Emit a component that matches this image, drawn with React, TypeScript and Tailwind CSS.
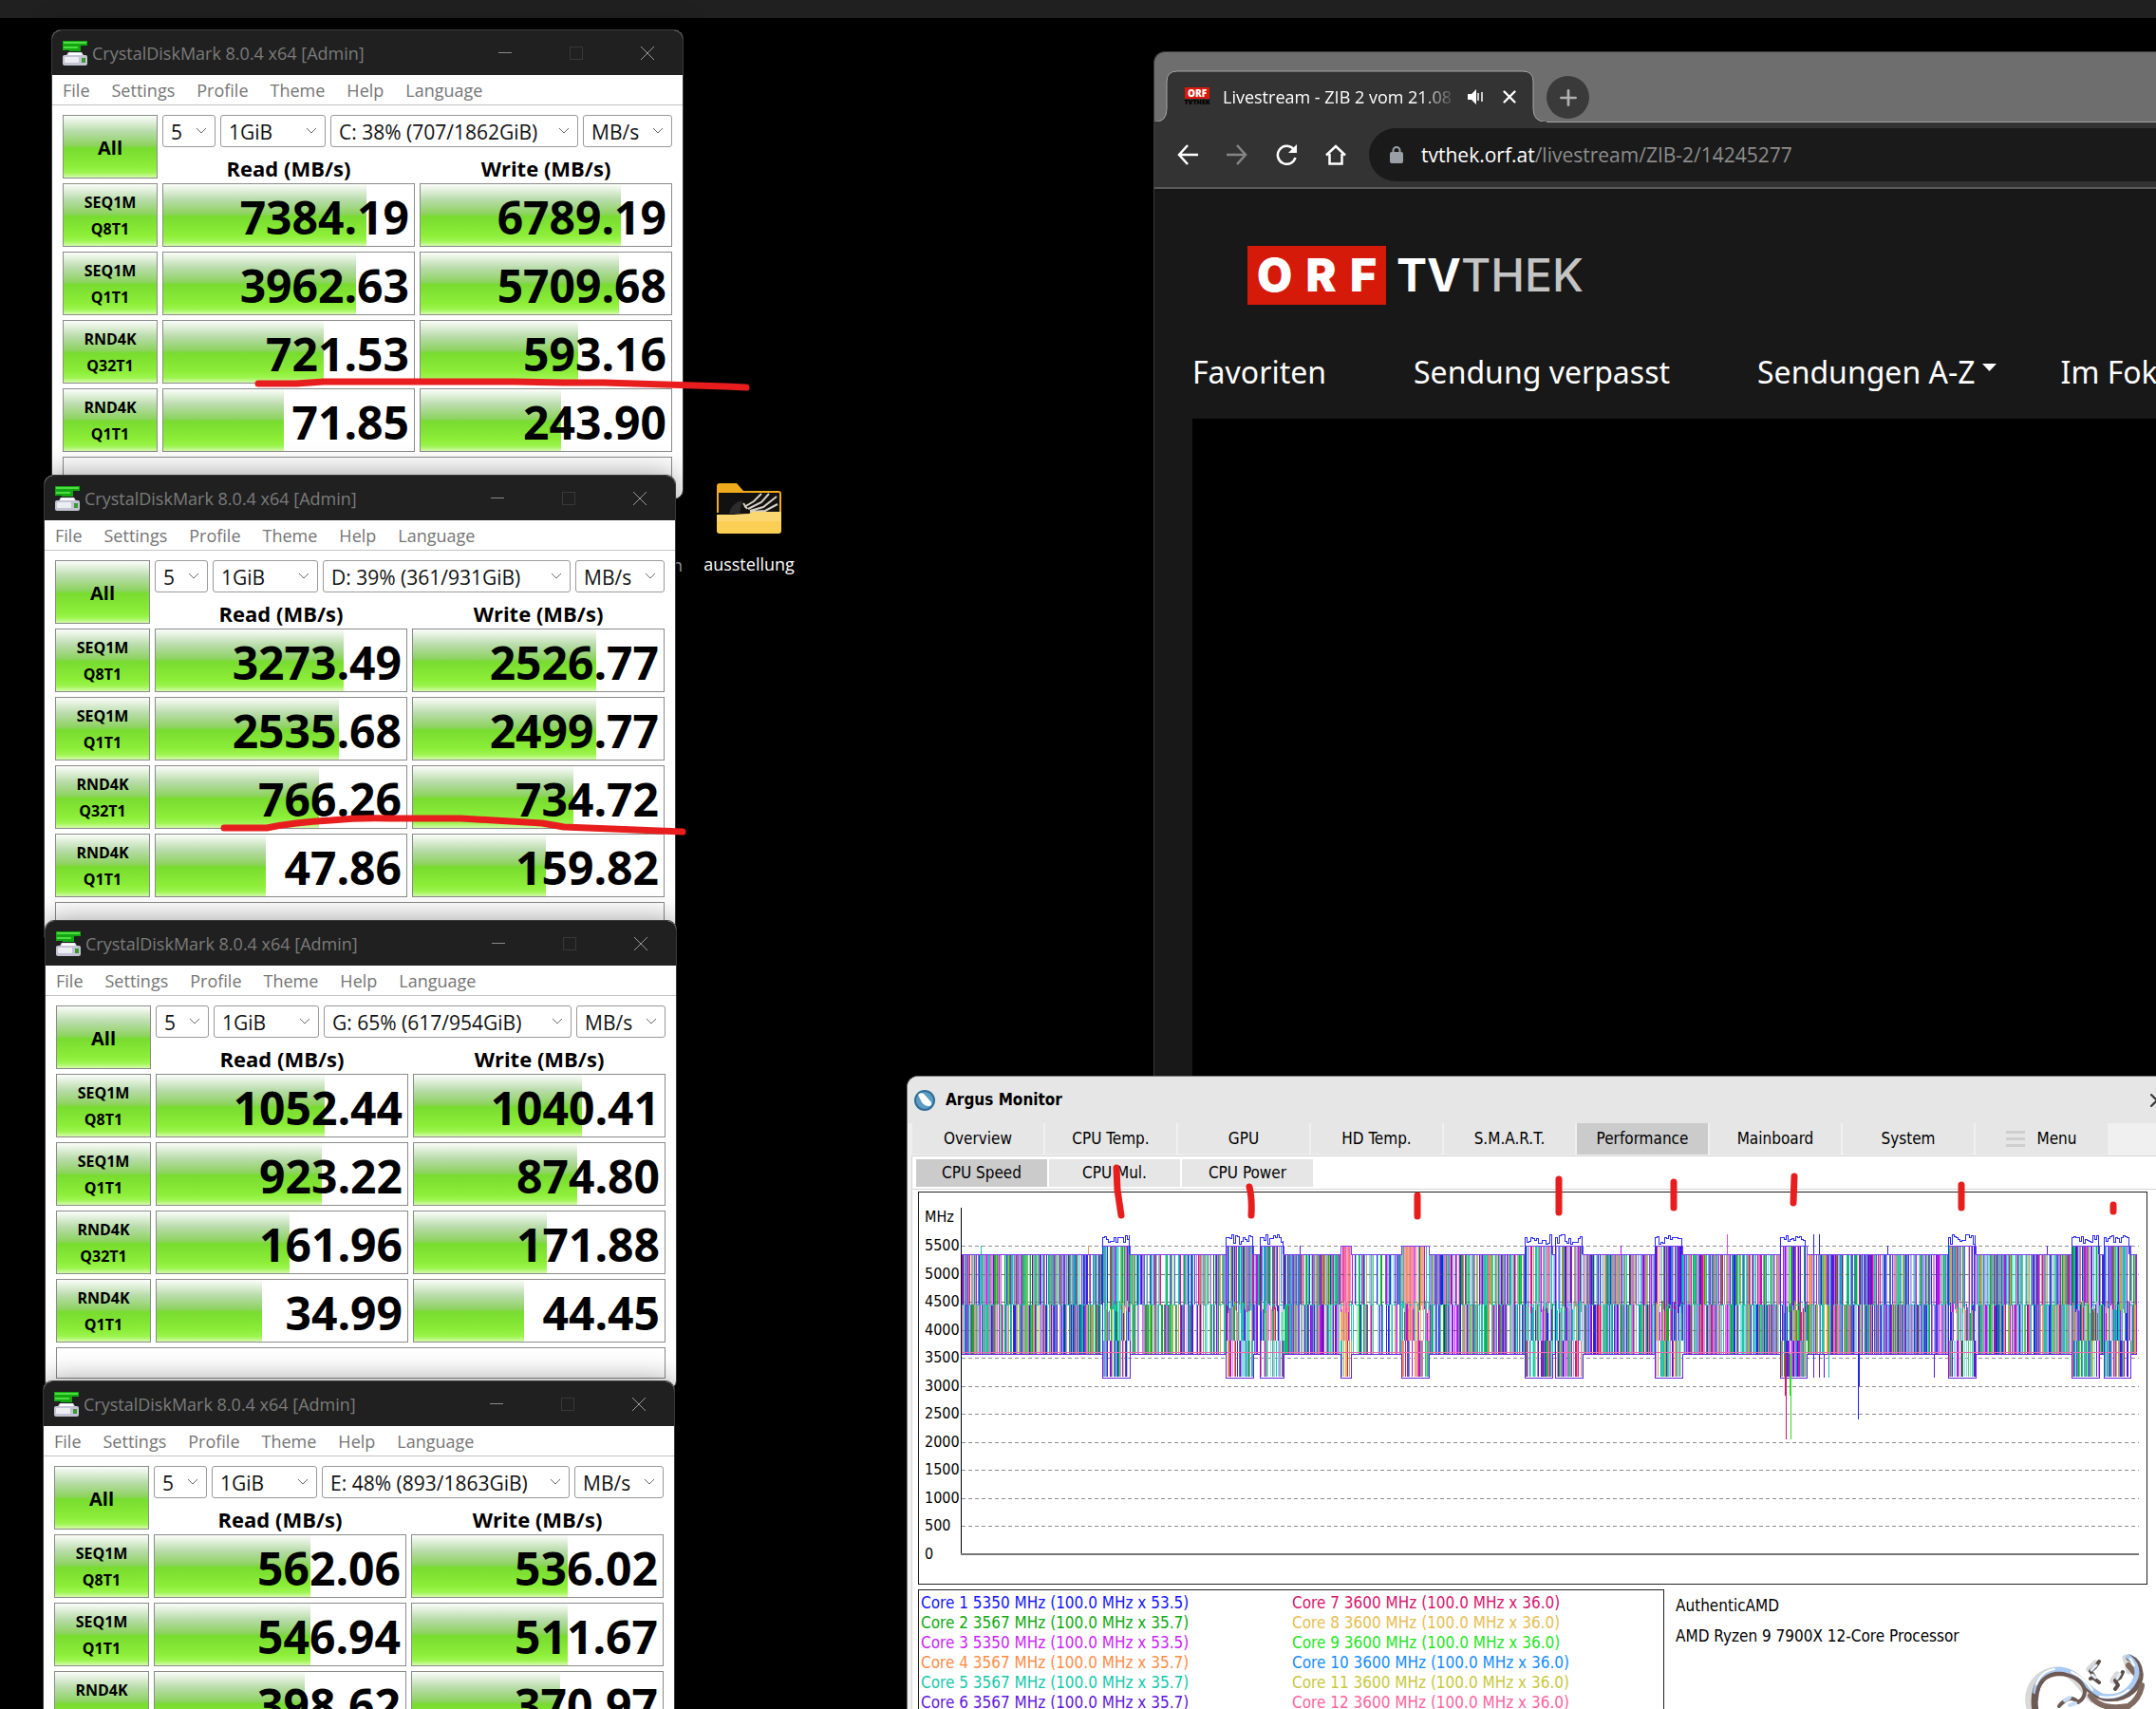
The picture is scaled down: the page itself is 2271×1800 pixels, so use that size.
import { LuPlus, LuX } from 'react-icons/lu';

interface TestRow {
    name: string;
    queue: string;
    read: string;
    readFill: number;
    write: string;
    writeFill: number;
}

interface DiskMarkProps {
    id: string;
    drive: string;
    place: string;
    rows: TestRow[];
}

const row = (
    name: string,
    queue: string,
    read: string,
    readFill: number,
    write: string,
    writeFill: number
): TestRow => ({ name, queue, read, readFill, write, writeFill });

const DISKS: DiskMarkProps[] = [
    {
        id: 'c',
        drive: 'C: 38% (707/1862GiB)',
        place: 'left-[54px] top-[31px]',
        rows: [
            row('SEQ1M', 'Q8T1', '7384.19', 81, '6789.19', 80),
            row('SEQ1M', 'Q1T1', '3962.63', 77, '5709.68', 79),
            row('RND4K', 'Q32T1', '721.53', 64, '593.16', 63),
            row('RND4K', 'Q1T1', '71.85', 48, '243.90', 56)
        ]
    },
    {
        id: 'd',
        drive: 'D: 39% (361/931GiB)',
        place: 'left-[46px] top-[500px]',
        rows: [
            row('SEQ1M', 'Q8T1', '3273.49', 75, '2526.77', 73),
            row('SEQ1M', 'Q1T1', '2535.68', 73, '2499.77', 73),
            row('RND4K', 'Q32T1', '766.26', 65, '734.72', 64),
            row('RND4K', 'Q1T1', '47.86', 44, '159.82', 53)
        ]
    },
    {
        id: 'g',
        drive: 'G: 65% (617/954GiB)',
        place: 'left-[47px] top-[969px]',
        rows: [
            row('SEQ1M', 'Q8T1', '1052.44', 67, '1040.41', 67),
            row('SEQ1M', 'Q1T1', '923.22', 66, '874.80', 65),
            row('RND4K', 'Q32T1', '161.96', 53, '171.88', 53),
            row('RND4K', 'Q1T1', '34.99', 42, '44.45', 44)
        ]
    },
    {
        id: 'e',
        drive: 'E: 48% (893/1863GiB)',
        place: 'left-[45px] top-[1454px]',
        rows: [
            row('SEQ1M', 'Q8T1', '562.06', 62, '536.02', 62),
            row('SEQ1M', 'Q1T1', '546.94', 62, '511.67', 62),
            row('RND4K', 'Q32T1', '398.62', 60, '370.97', 59)
        ]
    }
];

const MENU = ['File', 'Settings', 'Profile', 'Theme', 'Help', 'Language'];

const GREEN =
    'bg-[linear-gradient(to_bottom,#fbfdfa_0%,#b9dcab_25%,#8dd35f_48%,#78dc30_52%,#8cee38_82%,#9df550_92%,#d5fbab_100%)]';

function DiskIcon() {
    return (
        <svg viewBox="0 0 26 26" className="w-[26px] h-[26px]">
            <path d="M0 0h26v5h-7v6H7v-1H0z" fill="#12a612" />
            <path d="M1 1h24v2H1zM1 6h15v2H1z" fill="#4fdc42" />
            <path d="M6 12h14l3 5H3z" fill="#e4e6ee" />
            <path d="M7 13h12l1 2H6z" fill="#fff" />
            <rect x="0" y="15" width="26" height="11" rx="2" fill="#c3c5d4" />
            <rect x="2" y="17" width="15" height="6" rx="1" fill="#eceef4" />
            <rect x="20" y="18" width="4" height="5" fill="#3d9a32" />
        </svg>
    );
}

function Picker({ label, value, width }: { label: string; value: string; width: string }) {
    return (
        <div className={`relative ${width}`}>
            <select
                aria-label={label}
                className="block w-full h-[34px] appearance-none rounded-[3px] border border-[#9a9a9a] bg-white pl-2 pt-px text-[21px] leading-[32px] text-[#111]"
            >
                <option>{value}</option>
            </select>
            <svg
                viewBox="0 0 12 8"
                className="absolute right-[9px] top-[13px] w-3 h-2 pointer-events-none"
                fill="none"
                stroke="#666"
            >
                <path d="M1 1l5 5 5-5" />
            </svg>
        </div>
    );
}

function Score({ value, fill }: { value: string; fill: number }) {
    return (
        <td className="p-0">
            <div className="relative h-[67px] border border-[#8b8b8b] bg-white">
                <div className={`absolute inset-y-0 left-0 ${GREEN}`} style={{ width: `${fill}%` }} />
                <div className="relative pr-[5px] text-right text-[48px] leading-[69px] font-bold text-black">
                    {value}
                </div>
            </div>
        </td>
    );
}

function DiskMark({ drive, place, rows }: DiskMarkProps) {
    return (
        <section
            className={`absolute ${place} w-[666px] overflow-hidden rounded-[10px] border border-[#3a3a3a] bg-white shadow-[0_0_30px_rgba(0,0,0,0.4)]`}
        >
            <header className="flex items-center h-[47px] bg-[#202020] text-[#7b7b7b]">
                <div className="flex flex-1 items-center gap-[5px] pl-[11px] text-[18px] leading-6">
                    <DiskIcon />
                    <span>CrystalDiskMark 8.0.4 x64 [Admin]</span>
                </div>
                <button aria-label="Minimize" className="flex w-[75px] h-full items-center justify-center">
                    <span className="w-[14px] h-px bg-[#8a8a8a]" />
                </button>
                <button aria-label="Maximize" className="flex w-[75px] h-full items-center justify-center">
                    <span className="w-[14px] h-[14px] border border-[#383838]" />
                </button>
                <button aria-label="Close" className="flex w-[75px] h-full items-center justify-center">
                    <svg viewBox="0 0 14 14" className="w-[14px] h-[14px]" stroke="#9a9a9a">
                        <path d="M0 0l14 14M14 0L0 14" />
                    </svg>
                </button>
            </header>
            <nav className="flex h-[32px] items-center gap-[23px] border-b border-[#c4c4c4] pl-[11px] text-[18px] leading-6 text-[#757575]">
                {MENU.map((item) => (
                    <button key={item}>{item}</button>
                ))}
            </nav>
            <div className="px-[6px] pt-[5px] pb-[11px]">
                <table className="w-full table-fixed border-separate border-spacing-[5px]">
                    <colgroup>
                        <col className="w-[100px]" />
                        <col />
                        <col />
                    </colgroup>
                    <thead>
                        <tr>
                            <td rowSpan={2} className="p-0">
                                <button
                                    className={`block w-full h-[67px] border border-[#8b8b8b] pt-[2px] text-[20px] font-bold ${GREEN}`}
                                >
                                    All
                                </button>
                            </td>
                            <td colSpan={2} className="p-0">
                                <div className="flex gap-[5px]">
                                    <Picker label="Test count" value="5" width="w-[56px]" />
                                    <Picker label="Test size" value="1GiB" width="w-[111px]" />
                                    <Picker label="Drive" value={drive} width="flex-1" />
                                    <Picker label="Unit" value="MB/s" width="w-[94px]" />
                                </div>
                            </td>
                        </tr>
                        <tr>
                            <th className="h-7 p-0 pt-[6px] text-[22px] leading-[22px] font-bold">Read (MB/s)</th>
                            <th className="h-7 p-0 pt-[6px] text-[22px] leading-[22px] font-bold">Write (MB/s)</th>
                        </tr>
                    </thead>
                    <tbody>
                        {rows.map((r) => (
                            <tr key={r.name + r.queue}>
                                <th className="p-0">
                                    <button
                                        className={`block w-full h-[67px] border border-[#8b8b8b] text-[16px] leading-7 font-bold ${GREEN}`}
                                    >
                                        {r.name}
                                        <br />
                                        {r.queue}
                                    </button>
                                </th>
                                <Score value={r.read} fill={r.readFill} />
                                <Score value={r.write} fill={r.writeFill} />
                            </tr>
                        ))}
                    </tbody>
                </table>
                <div className="mx-[5px] h-[33px] border border-[#8b8b8b] bg-white" />
            </div>
        </section>
    );
}

function DesktopFolder() {
    return (
        <div className="absolute left-[736px] top-[507px] flex w-[106px] flex-col items-center gap-[19px]">
            <svg viewBox="0 0 70 56" className="w-[70px] h-14">
                <path d="M1 5q0-3 3-3h18l7 8h37q3 0 3 3v20H1z" fill="#f0ac1c" />
                <path d="M3 12h64v24H3z" fill="#111" />
                <path d="M14 34q2-11 14-14l-3 14z" fill="#2c2c2c" />
                <g stroke="#d8d0c4" strokeWidth="2" fill="none">
                    <path d="M30 27l10-6 8-8M34 29l14-7 8-9M36 31l14-4 14-11M36 32l16-1 13-7M33 29l-4-6" />
                </g>
                <path d="M1 35h18l16-1 4-2h30v20q0 3-3 3H4q-3 0-3-3z" fill="#fbcf55" />
                <path d="M1 35h18l16-1 4-2h30v10H1z" fill="#fcdc85" opacity=".6" />
            </svg>
            <span className="text-[18px] leading-6 text-white">ausstellung</span>
        </div>
    );
}

function Browser() {
    return (
        <section className="absolute left-[1215px] right-0 top-[54px] bottom-0 flex flex-col overflow-hidden rounded-tl-[12px] border-l border-t border-[#3a3a3a] bg-[#181818]">
            <div className="relative flex h-[74px] shrink-0 items-end bg-[#6e6e6e]">
                <div className="absolute inset-x-0 bottom-0 h-px bg-[#a5a5a5]" />
                <svg viewBox="0 0 414 55" className="absolute left-0 bottom-0 w-[414px] h-[55px]">
                    <path
                        d="M0 54.5q13 0 13-14V12Q13 1 24 1H388q11 0 11 11V40.500q0 14 14 14V55H0z"
                        fill="#333"
                        stroke="#a5a5a5"
                    />
                    <path d="M0 55h413" stroke="#333" strokeWidth="2" />
                </svg>
                <div className="relative flex h-[54px] w-[400px] items-center pl-8 text-white">
                    <div className="flex w-[26px] flex-col items-center font-black">
                        <span className="w-full bg-[#d8190c] text-center text-[10px] leading-[12px]">ORF</span>
                        <span className="text-[7px] leading-[8px] text-black">TVTHEK</span>
                    </div>
                    <span className="ml-[14px] w-[246px] overflow-hidden whitespace-nowrap text-[18px] leading-6 [mask-image:linear-gradient(to_right,black_85%,transparent)]">
                        Livestream - ZIB 2 vom 21.08
                    </span>
                    <button aria-label="Mute tab" className="ml-3">
                        <svg viewBox="0 0 17 16" className="w-[17px] h-4" fill="#fff">
                            <path d="M0 5h4l5-5v16l-5-5H0z" />
                            <path d="M11 4v8M15 3v10" stroke="#fff" strokeWidth="1.500" />
                        </svg>
                    </button>
                    <button aria-label="Close tab" className="ml-4">
                        <LuX size={22} strokeWidth={2.5} />
                    </button>
                </div>
                <button
                    aria-label="New tab"
                    className="relative mb-1 ml-[13px] flex h-[45px] w-[45px] items-center justify-center rounded-full bg-[#3a3a3a] text-[#b0b0b0]"
                >
                    <LuPlus size={26} strokeWidth={2.5} />
                </button>
            </div>
            <div className="flex h-[70px] shrink-0 items-center border-b-2 border-[#5a5a5a] bg-[#333] pl-6">
                <div className="flex w-[202px] items-center gap-[30px]">
                    <button aria-label="Back">
                        <svg viewBox="0 0 22 22" className="w-[22px] h-[22px]" fill="none" stroke="#fff" strokeWidth="2.500">
                            <path d="M22 11H2M11 1L2 11l9 10" />
                        </svg>
                    </button>
                    <button aria-label="Forward">
                        <svg viewBox="0 0 22 22" className="w-[22px] h-[22px]" fill="none" stroke="#858585" strokeWidth="2.500">
                            <path d="M0 11h20M11 1l9 10-9 10" />
                        </svg>
                    </button>
                    <button aria-label="Reload">
                        <svg viewBox="0 0 22 22" className="w-[22px] h-[22px]" fill="none" stroke="#fff" strokeWidth="2.500">
                            <path d="M18.500 5A9.500 9.500 0 1 0 20.500 14" />
                            <path d="M22 0v9h-9z" fill="#fff" stroke="none" />
                        </svg>
                    </button>
                    <button aria-label="Home">
                        <svg viewBox="0 0 22 22" className="w-[22px] h-[22px]" fill="none" stroke="#fff" strokeWidth="2.500">
                            <path d="M4.500 10v10.500h13V10M1 11.500L11 2l10 9.500" />
                        </svg>
                    </button>
                </div>
                <div className="flex h-14 flex-1 items-center rounded-l-full bg-[#1a1a1a] pl-[22px]">
                    <svg viewBox="0 0 14 18" className="w-[14px] h-[18px]">
                        <rect y="6" width="14" height="12" rx="2" fill="#9aa0a6" />
                        <path d="M3.500 7V4.500a3.500 3.500 0 0 1 7 0V7" fill="none" stroke="#9aa0a6" strokeWidth="2" />
                    </svg>
                    <a href="#live" className="ml-[19px] text-[21px] leading-7 text-[#8c8c8c]">
                        <span className="text-white">tvthek.orf.at</span>/livestream/ZIB-2/14245277
                    </a>
                </div>
            </div>
            <a
                href="#home"
                className="mt-[60px] ml-[98px] flex items-center self-start font-[Inter] text-[48px] leading-[62px]"
                aria-label="ORF TVthek"
            >
                <span className="flex h-[62px] w-[146px] items-center justify-between bg-[#d51a0a] px-[10px] font-black text-white">
                    <span>O</span>
                    <span>R</span>
                    <span>F</span>
                </span>
                <span className="ml-[11px] font-bold text-white">TV</span>
                <span className="font-medium text-[#c4c4c4]">THEK</span>
            </a>
            <nav className="mt-[50px] flex gap-[92px] whitespace-nowrap pl-10 font-['Noto_Sans'] text-[32px] leading-[42px] text-white">
                <a href="#fav">Favoriten</a>
                <a href="#missed">Sendung verpasst</a>
                <span className="flex gap-[68px]">
                    <a href="#az" className="flex gap-[7px]">
                        Sendungen A-Z
                        <svg viewBox="0 0 15 9" className="mt-[12px] w-[15px] h-[9px]" fill="#fff">
                            <path d="M0 0h15L7.500 8z" />
                        </svg>
                    </a>
                    <a href="#focus">Im Fokus</a>
                </span>
            </nav>
            <div className="mt-7 ml-10 flex-1 bg-black" />
        </section>
    );
}

// --- CPU frequency plot -------------------------------------------------

const PLOT_W = 1239;
const TOP = 49;
const MID = 102;
const BOTTOM = 154;

const SHADES = [
    '#12c8ae', '#12c8ae', '#12c8ae', '#86e2d8', '#86e2d8', '#86e2d8',
    '#b414f0', '#b414f0', '#dd84fb', '#dd84fb', '#5a18dc', '#5a18dc',
    '#4a68d0', '#2222f0', '#10b028', '#10b028', '#58d078', '#d81484',
    '#f768a8', '#f09860', '#7d8ca0', '#a08ce0', '#b8b030', '#1890d8'
];

// start, end, warm: stretches where the cores clock above base
const BURSTS: [number, number, boolean][] = [
    [149, 178, false], [279, 308, false], [315, 340, false], [400, 411, true],
    [464, 493, true], [594, 623, false], [626, 655, false], [731, 760, false],
    [863, 891, false], [1040, 1069, false], [1170, 1199, false], [1204, 1232, false]
];

const WARM = ['#f0905a', '#f768a8', '#d81484', '#d8c040', '#fa9cc0', '#e8a070', '#12c8ae', '#b414f0'];

const SPIKES: [number, number, string][] = [
    [21, 40, '#12c8ae'], [134, 40, '#f09860'], [357, 40, '#5a18dc'], [695, 40, '#b414f0'],
    [807, 28, '#dd44fb'], [898, 28, '#2222f0'], [904, 28, '#2222f0'], [976, 40, '#2222f0'],
    [1144, 40, '#5a18dc']
];

const DROPS: [number, number, string][] = [
    [868, 198, '#d81460'], [869, 244, '#d8146c'], [873, 198, '#28e028'], [874, 244, '#28e028'],
    [945, 223, '#2222f0'], [946, 188, '#2222f0'], [898, 179, '#5a18dc'], [904, 179, '#5a18dc'],
    [909, 179, '#5a18dc'], [914, 179, '#12c8ae'], [1025, 179, '#5a18dc']
];

function buildPlot() {
    let seed = 7;
    const rnd = () => {
        seed = (seed * 16807) % 2147483647;
        return seed / 2147483647;
    };
    const pick = (list: string[]) => list[Math.floor(rnd() * list.length)];
    const paths: Record<string, string> = {};
    const line = (color: string, x: number, y1: number, y2: number) => {
        paths[color] = `${paths[color] ?? ''}M${x + 0.5} ${y1}V${y2}`;
    };
    let blue = '';

    for (let x = 0; x < PLOT_W; x++) {
        const burst = BURSTS.find(([a, b]) => x >= a && x <= b);
        if (burst) {
            const colors = burst[2] ? WARM : SHADES;
            const mid = 98 + Math.floor(rnd() * 14);
            if (rnd() < 0.85) line(pick(colors), x, 40, mid);
            if (rnd() < 0.85) line(pick(colors), x, mid, 140);
            if (rnd() < 0.8) line(pick(colors), x, 140, 178);
        } else {
            const sparse = (x > 205 && x < 278) || (x > 412 && x < 462);
            const gap = sparse ? 0.4 : 0.1;
            const upper = pick(SHADES);
            if (rnd() > gap) line(upper, x, TOP, MID);
            if (rnd() > gap) line(rnd() < 0.3 ? upper : pick(SHADES), x, MID, BOTTOM);
        }
    }

    BURSTS.forEach(([a, b, warm]) => {
        if (warm) return;
        let d = `M${a} ${BOTTOM}V31`;
        for (let x = a + 2; x < b; x += 2) d += `H${x}V${28 + Math.floor(rnd() * 11)}`;
        blue += `${d}V${TOP}`;
    });
    return { paths, blue };
}

const PLOT = buildPlot();

function outline() {
    let floor = `M0 ${BOTTOM}`;
    let roof = `M0 ${TOP}`;
    BURSTS.forEach(([a, b]) => {
        floor += `H${a}V179H${b}V${BOTTOM}`;
        roof += `H${a}V40H${b}V${TOP}`;
    });
    return { floor: `${floor}H${PLOT_W}`, roof: `${roof}H${PLOT_W}` };
}

const EDGE = outline();

function CpuPlot() {
    const grid = Array.from({ length: 11 }, (_, i) => 365 - Math.round(((i + 1) * 325) / 11));
    return (
        <svg
            viewBox="0 0 1241 368"
            preserveAspectRatio="none"
            className="h-[368px] flex-1"
            fill="none"
            shapeRendering="crispEdges"
        >
            {grid.map((y) => (
                <path key={y} d={`M1 ${y + 0.5}H1241`} stroke="#8c8c8c" strokeDasharray="4 3" />
            ))}
            {Object.entries(PLOT.paths).map(([color, d]) => (
                <path key={color} d={d} stroke={color} />
            ))}
            {grid.slice(7, 10).map((y) => (
                <path key={y} d={`M1 ${y + 0.5}H${PLOT_W}`} stroke="#555" strokeOpacity=".5" strokeDasharray="4 3" />
            ))}
            <path d={EDGE.roof} stroke="#7a3cf0" />
            <path d={`M0 ${MID}.5H${PLOT_W}`} stroke="#12c8ae" strokeDasharray="3 5" />
            <path d={`M0 152.5H${PLOT_W}`} stroke="#f06aa8" />
            <path d={EDGE.floor} stroke="#6a1edc" />
            <path d={PLOT.blue} stroke="#2a2af5" />
            {SPIKES.map(([x, y, color]) => (
                <path key={x} d={`M${x + 0.5} ${TOP}V${y}`} stroke={color} />
            ))}
            {DROPS.map(([x, y, color]) => (
                <path key={x} d={`M${x + 0.5} ${BOTTOM}V${y}`} stroke={color} />
            ))}
            <path d="M.5 0V366" stroke="#000" />
            <path d="M0 365H1241" stroke="#777" strokeWidth="2" />
        </svg>
    );
}

const CORES = [
    ['text-[#1414ff]', 'Core 1 5350 MHz (100.0 MHz x 53.5)'],
    ['text-[#0eaa0e]', 'Core 2 3567 MHz (100.0 MHz x 35.7)'],
    ['text-[#cc1eff]', 'Core 3 5350 MHz (100.0 MHz x 53.5)'],
    ['text-[#ff8c46]', 'Core 4 3567 MHz (100.0 MHz x 35.7)'],
    ['text-[#14c8aa]', 'Core 5 3567 MHz (100.0 MHz x 35.7)'],
    ['text-[#5f14dc]', 'Core 6 3567 MHz (100.0 MHz x 35.7)'],
    ['text-[#d8146c]', 'Core 7 3600 MHz (100.0 MHz x 36.0)'],
    ['text-[#e6be50]', 'Core 8 3600 MHz (100.0 MHz x 36.0)'],
    ['text-[#1ee61e]', 'Core 9 3600 MHz (100.0 MHz x 36.0)'],
    ['text-[#148cff]', 'Core 10 3600 MHz (100.0 MHz x 36.0)'],
    ['text-[#c8c83c]', 'Core 11 3600 MHz (100.0 MHz x 36.0)'],
    ['text-[#ff64a0]', 'Core 12 3600 MHz (100.0 MHz x 36.0)']
];

const TABS = ['Overview', 'CPU Temp.', 'GPU', 'HD Temp.', 'S.M.A.R.T.', 'Performance', 'Mainboard', 'System'];
const SUB_TABS = ['CPU Speed', 'CPU Mul.', 'CPU Power'];
const TICKS = [5500, 5000, 4500, 4000, 3500, 3000, 2500, 2000, 1500, 1000, 500, 0];

function Gecko() {
    return (
        <svg
            viewBox="0 0 151 80"
            className="pointer-events-none absolute right-[14px] bottom-0 w-[151px] h-20"
            fill="none"
            strokeLinecap="round"
            strokeLinejoin="round"
        >
            <g stroke="#aaa" strokeWidth="7" opacity=".45">
                <path d="M18 80C12 56 28 40 46 39 66 42 74 62 84 70" />
                <path d="M81 38l6-6M106 50l4-6M119 26l4 14" />
            </g>
            <path d="M24 82C20 58 30 41 50 40 72 41 76 62 96 68 122 72 136 54 134 42 133 32 128 28 123 26" stroke="#6d5a55" strokeWidth="7" />
            <path d="M122 34l10 12M82 66q10 16 40 11 12-8 14-22" stroke="#80695f" strokeWidth="6" />
            <path d="M24 62C26 46 36 38 50 38 70 40 76 58 94 66 114 70 128 58 131 42 131 34 126 28 122 25" stroke="#a9caf2" strokeWidth="5" />
            <path d="M25 54Q30 40 44 38M62 41Q76 48 84 60M92 67Q110 70 122 60M128 34l-4-7" stroke="#fff" strokeWidth="2" />
            <path d="M25 70q1-26 24-27 24 2 27 18 0 8-7 12-5-6-12-3-6 4-8 7" stroke="#6d5a55" strokeWidth="4" />
            <path d="M60 68l-5 3M66 74l-6 2" stroke="#c6dcf6" strokeWidth="4" />
            <path d="M91 30l-4 6-5 4 4 6-4 2M86 48l5 4M116 41l-3 6-5 3 3 5-3 4" stroke="#5c4e4b" strokeWidth="4" />
            <path d="M88 34l-5 5M84 44l3 3M113 43l-3 5" stroke="#e4eefb" strokeWidth="3" />
        </svg>
    );
}

function Argus() {
    return (
        <section className="absolute left-[955px] -right-[14px] top-[1133px] bottom-0 flex flex-col overflow-hidden rounded-tl-[12px] border-l border-t border-[#777] bg-[#f0f0f0] font-['DejaVu_Sans_Condensed','DejaVu_Sans',sans-serif] text-[17px] text-black">
            <header className="flex h-[49px] shrink-0 items-center bg-[#e6e6e6] pl-[7px]">
                <svg viewBox="0 0 22 22" className="w-[22px] h-[22px]">
                    <circle cx="11" cy="11" r="11" fill="#2d6d98" />
                    <circle cx="11" cy="11" r="9" fill="#5b9cc4" />
                    <path d="M4 5q2-3 6-1l8 9q1 4-3 4-4 0-7-4z" fill="#fff" />
                </svg>
                <h1 className="ml-[11px] flex-1 text-[17px] font-bold">Argus Monitor</h1>
                <button aria-label="Close" className="pr-px">
                    <LuX size={24} strokeWidth={2} color="#333" />
                </button>
            </header>
            <nav className="flex h-[33px] shrink-0 gap-[2px] pl-[5px]">
                {TABS.map((tab) => (
                    <button
                        key={tab}
                        className={`w-[138px] shrink-0 pt-px ${tab === 'Performance' ? 'bg-[#cbcbcb]' : 'bg-[#e6e6e6]'}`}
                    >
                        {tab}
                    </button>
                ))}
                <button className="flex w-[139px] shrink-0 items-center justify-center gap-3 bg-[#e6e6e6]">
                    <span className="flex w-5 flex-col gap-1">
                        <span className="h-[3px] bg-[#cfcfcf]" />
                        <span className="h-[3px] bg-[#cfcfcf]" />
                        <span className="h-[3px] bg-[#cfcfcf]" />
                    </span>
                    Menu
                </button>
            </nav>
            <div className="ml-1 mt-px flex flex-1 flex-col border-l border-t border-[#d5d5d5] bg-white">
                <nav className="flex h-[35px] gap-[2px] border-b border-[#d5d5d5] pl-1 pt-[3px] pb-[2px]">
                    {SUB_TABS.map((tab) => (
                        <button
                            key={tab}
                            className={`w-[138px] pt-px ${tab === 'CPU Speed' ? 'bg-[#cbcbcb]' : 'bg-[#e6e6e6]'}`}
                        >
                            {tab}
                        </button>
                    ))}
                </nav>
                <div className="ml-[6px] mr-[23px] mt-[2px] flex h-[414px] border border-[#222] pr-2 pt-4">
                    <div className="-mt-0.5 flex h-[379px] w-[44px] flex-col pl-[6px] text-[16px] leading-6">
                        <span className="mb-[6px]">MHz</span>
                        <div className="flex flex-1 flex-col justify-between">
                            {TICKS.map((t) => (
                                <span key={t}>{t}</span>
                            ))}
                        </div>
                    </div>
                    <CpuPlot />
                </div>
                <div className="ml-[6px] mt-[5px] flex flex-1">
                    <div className="grid w-[786px] grid-cols-2 border border-b-0 border-[#222] pl-[2px]">
                        {[CORES.slice(0, 6), CORES.slice(6)].map((half, i) => (
                            <ul key={i} className="pt-[3px] leading-[21px]">
                                {half.map(([color, text]) => (
                                    <li key={text} className={color}>
                                        {text}
                                    </li>
                                ))}
                            </ul>
                        ))}
                    </div>
                    <div className="pl-3">
                        <p className="mt-[6px] leading-[22px]">AuthenticAMD</p>
                        <p className="mt-[10px] leading-[22px]">AMD Ryzen 9 7900X 12-Core Processor</p>
                    </div>
                </div>
            </div>
            <Gecko />
        </section>
    );
}

// Red pen strokes drawn over everything
function Marks() {
    return (
        <svg
            viewBox="0 0 2271 1800"
            className="pointer-events-none absolute left-0 top-0 w-[2271px] h-[1800px]"
            fill="none"
            stroke="#e81e1e"
            strokeWidth="7"
            strokeLinecap="round"
            strokeLinejoin="round"
        >
            <path d="M272 404H312L341 402H542L594 403H636L764 407 786 408" />
            <path d="M236 872H281Q310 866 348 864 380 861 410 862H486L571 867 594 871 719 876" />
            <path d="M1176 1230L1177 1253 1181 1280M1316 1250Q1319 1262 1318 1280M1493 1259V1281" />
            <path d="M1642 1242V1277M1763 1245V1272M1890 1239L1889 1267M2066 1248V1272M2226 1269V1276" />
        </svg>
    );
}

export default function App() {
    return (
        <main className="relative min-h-screen w-full overflow-hidden bg-black font-['Open_Sans','Noto_Sans',sans-serif]">
            <div className="h-[19px] bg-[#202020]" />
            <span className="absolute left-[708px] top-[583px] text-[18px] leading-6 text-[#aaa]">n</span>
            {DISKS.map((disk) => (
                <DiskMark key={disk.id} {...disk} />
            ))}
            <DesktopFolder />
            <Browser />
            <Argus />
            <Marks />
        </main>
    );
}
